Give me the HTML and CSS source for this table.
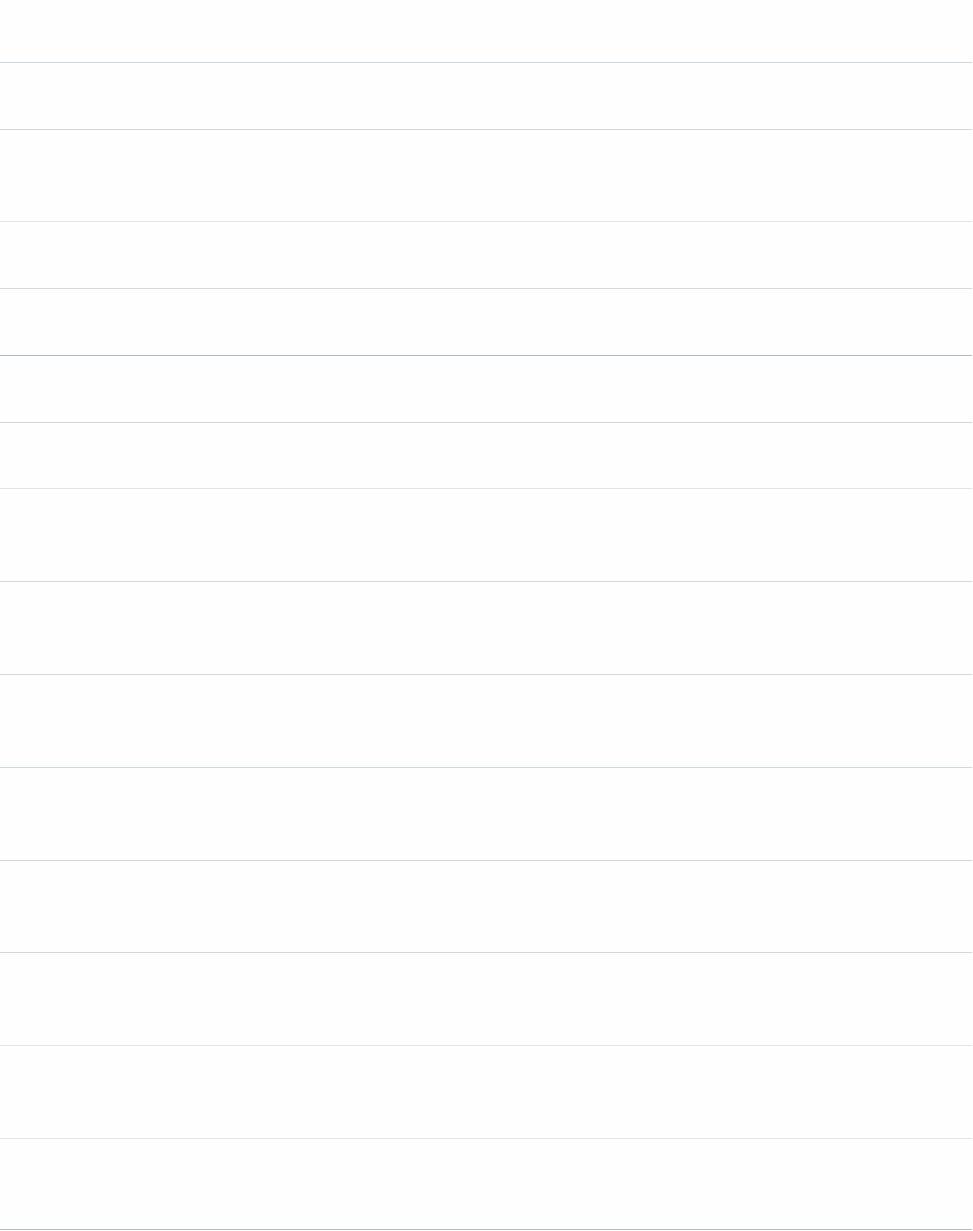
FILE: index.html
```html
<!DOCTYPE html>
<html lang="en">
<head>
  <meta charset="UTF-8" />
  <meta name="viewport" content="width=device-width, initial-scale=1.0"/>
  <title>List</title>
  <link rel="stylesheet" href="styles.css">
</head>
<body>

  <div class="list">
    <div class="row row-head"></div>
    <div class="row row-short line-grey"></div>
    <div class="row row-mid line-faint"></div>
    <div class="row row-short line-grey"></div>
    <div class="row row-short line-dark"></div>
    <div class="row row-short"></div>
    <div class="row row-low line-faint"></div>
    <div class="row row-tall"></div>
    <div class="row row-tall"></div>
    <div class="row row-tall"></div>
    <div class="row row-tall"></div>
    <div class="row row-mid"></div>
    <div class="row row-tall line-faint"></div>
    <div class="row row-tall line-faint"></div>
    <div class="row row-end line-dark"></div>
  </div>

</body>
</html>
```

FILE: styles.css
```css
html, body {
  margin: 0;
  padding: 0;
  background-color: #fefefe;
  font-family: 'Liberation Sans', Arial, sans-serif;
}

.list {
  width: 972px;
}

.row {
  height: 66px;
  border-bottom: 1px solid #cfd6dc;
}

.row-head {
  height: 62px;
}

.row-low {
  height: 65px;
}

.row-tall {
  height: 92px;
}

.row-mid {
  height: 91px;
}

.row-end {
  height: 90px;
}

.line-grey {
  border-bottom-color: #d5d9dc;
}

.line-faint {
  border-bottom-color: #dfe5e8;
}

.line-dark {
  border-bottom-color: #b3bcc2;
}
```
